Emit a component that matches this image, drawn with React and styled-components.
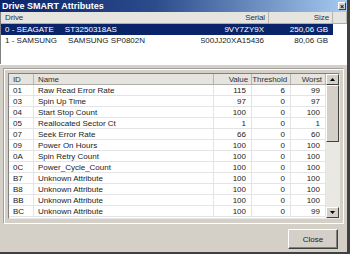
import styled, { createGlobalStyle } from "styled-components";

const GlobalStyle = createGlobalStyle`
  html, body {
    margin: 0;
    padding: 0;
    background: #d4d0c8;
  }
  * {
    box-sizing: border-box;
  }
`;

const Window = styled.div`
  width: 350px;
  height: 254px;
  background: #d4d0c8;
  border-right: 3px solid #404040;
  border-bottom: 2px solid #404040;
  display: flex;
  flex-direction: column;
  font-family: "Liberation Sans", Arial, sans-serif;
  font-size: 8px;
  color: #1a1a1a;
  overflow: hidden;
`;

const TitleBar = styled.div`
  height: 12px;
  flex: none;
  display: flex;
  align-items: center;
  justify-content: space-between;
  padding: 0 1px 0 2px;
  background: linear-gradient(to right, #0a246a 0%, #2c4c8c 45%, #a6caf0 100%);
  color: #fff;
  font-weight: bold;
  font-size: 9px;
`;

const CloseBox = styled.div`
  width: 8px;
  height: 8px;
  background: #d4d0c8;
  border: 1px solid #fff;
  border-right-color: #404040;
  border-bottom-color: #404040;
  display: flex;
  align-items: center;
  justify-content: center;
  color: #000;
  font-size: 7px;
  line-height: 1;
`;

const DriveList = styled.div`
  height: 52px;
  flex: none;
  background: #fff;
  border-left: 1px solid #808080;
`;

const Header = styled.div`
  display: grid;
  grid-template-columns: ${(p) => p.$cols};
  height: ${(p) => p.$h || 11}px;
  background: #e6e4de;
  border-bottom: 1px solid #b0aea8;
`;

const HeadCell = styled.div`
  display: flex;
  align-items: center;
  justify-content: ${(p) => (p.$right ? "flex-end" : "flex-start")};
  padding: ${(p) => (p.$right ? "0 3px 0 0" : "0 4px")};
  border-right: ${(p) => (p.$plain ? "none" : "1px solid #b8b6b0")};
  white-space: nowrap;
  letter-spacing: -0.1px;
  color: #333;
`;

const Row = styled.div`
  display: grid;
  grid-template-columns: ${(p) => p.$cols};
  height: 11px;
  background: ${(p) => (p.$selected ? "#0a246a" : "transparent")};
  color: ${(p) => (p.$selected ? "#fff" : "#1a1a1a")};
  border-bottom: ${(p) => (p.$lines ? "1px solid #e4e4e4" : "none")};
`;

const Cell = styled.div`
  display: flex;
  align-items: center;
  justify-content: ${(p) => (p.$right ? "flex-end" : "flex-start")};
  padding: 0 ${(p) => (p.$right ? 5 : 3)}px 0 4px;
  white-space: pre;
  overflow: hidden;
  background: ${(p) => (p.$blank ? "#fff" : "transparent")};
  border-right: ${(p) => (p.$lines ? "1px solid #e4e4e4" : "none")};
`;

const Gap = styled.div`
  height: 4px;
  flex: none;
  border-top: 1px solid #fff;
`;

const Panel = styled.div`
  height: 156px;
  flex: none;
  margin: 0 3px;
  padding: 4px 3px 4px 4px;
  border: 1px solid #a0a0a0;
  border-right-color: #fff;
  border-bottom-color: #fff;
  box-shadow: inset 1px 1px 0 #fff;
`;

const AttrBox = styled.div`
  height: 146px;
  display: flex;
  background: #fff;
  border: 1px solid #808080;
  border-right-color: #e8e8e8;
  border-bottom-color: #e8e8e8;
`;

const AttrTable = styled.div`
  flex: 1;
`;

const ScrollBar = styled.div`
  width: 13px;
  flex: none;
  display: flex;
  flex-direction: column;
  background: #eae8e2;
`;

const ScrollBtn = styled.div`
  height: 11px;
  flex: none;
  background: #d4d0c8;
  border: 1px solid #fff;
  border-right-color: #404040;
  border-bottom-color: #404040;
  display: flex;
  align-items: center;
  justify-content: center;
`;

const Thumb = styled.div`
  height: 57px;
  flex: none;
  background: #d4d0c8;
  border: 1px solid #fff;
  border-right-color: #404040;
  border-bottom-color: #404040;
`;

const Track = styled.div`
  flex: 1;
`;

const Footer = styled.div`
  flex: 1;
  display: flex;
  justify-content: flex-end;
  align-items: flex-start;
  padding: 5px 9px 0 0;
`;

const Button = styled.button`
  width: 50px;
  height: 20px;
  background: #d4d0c8;
  border: 1px solid #fff;
  border-right-color: #404040;
  border-bottom-color: #404040;
  box-shadow: inset -1px -1px 0 #808080;
  font-family: "Liberation Sans", Arial, sans-serif;
  font-size: 8px;
  color: #1a1a1a;
  padding: 0;
`;

const Arrow = ({ up }) => (
  <svg width="5" height="3" viewBox="0 0 5 3">
    <path d={up ? "M0 3 L2.5 0 L5 3 Z" : "M0 0 L2.5 3 L5 0 Z"} fill="#000" />
  </svg>
);

const driveCols = "200px 68px 64px 1fr";
const drives = [
  { name: "0 - SEAGATE     ST3250318AS", serial: "9VY7ZY9X", size: "250,06 GB" },
  { name: "1 - SAMSUNG     SAMSUNG SP0802N", serial: "S00JJ20XA15436", size: "80,06 GB" },
];

const attrCols = "25px 180px 38px 39px 1fr";
const attrs = [
  ["01", "Raw Read Error Rate", 115, 6, 99],
  ["03", "Spin Up Time", 97, 0, 97],
  ["04", "Start Stop Count", 100, 0, 100],
  ["05", "Reallocated Sector Ct", 1, 0, 1],
  ["07", "Seek Error Rate", 66, 0, 60],
  ["09", "Power On Hours", 100, 0, 100],
  ["0A", "Spin Retry Count", 100, 0, 100],
  ["0C", "Power_Cycle_Count", 100, 0, 100],
  ["B7", "Unknown Attribute", 100, 0, 100],
  ["B8", "Unknown Attribute", 100, 0, 100],
  ["BB", "Unknown Attribute", 100, 0, 100],
  ["BC", "Unknown Attribute", 100, 0, 99],
];

export default function App() {
  return (
    <>
      <GlobalStyle />
      <Window>
        <TitleBar>
          <span>Drive SMART Attributes</span>
          <CloseBox>×</CloseBox>
        </TitleBar>
        <DriveList>
          <Header $cols={driveCols} $h={12}>
            <HeadCell $plain>Drive</HeadCell>
            <HeadCell $right>Serial</HeadCell>
            <HeadCell $right>Size</HeadCell>
            <HeadCell />
          </Header>
          {drives.map((d, i) => (
            <Row key={d.serial} $cols={driveCols} $selected={i === 0}>
              <Cell>{d.name}</Cell>
              <Cell $right>{d.serial}</Cell>
              <Cell $right>{d.size}</Cell>
              <Cell $blank />
            </Row>
          ))}
        </DriveList>
        <Gap />
        <Panel>
          <AttrBox>
            <AttrTable>
              <Header $cols={attrCols}>
                <HeadCell>ID</HeadCell>
                <HeadCell>Name</HeadCell>
                <HeadCell $right>Value</HeadCell>
                <HeadCell $right>Threshold</HeadCell>
                <HeadCell $right>Worst</HeadCell>
              </Header>
              {attrs.map(([id, name, value, thr, worst]) => (
                <Row key={id + name} $cols={attrCols} $lines>
                  <Cell $lines>{id}</Cell>
                  <Cell $lines>{name}</Cell>
                  <Cell $lines $right>{value}</Cell>
                  <Cell $lines $right>{thr}</Cell>
                  <Cell $lines $right>{worst}</Cell>
                </Row>
              ))}
            </AttrTable>
            <ScrollBar>
              <ScrollBtn>
                <Arrow up />
              </ScrollBtn>
              <Thumb />
              <Track />
              <ScrollBtn>
                <Arrow />
              </ScrollBtn>
            </ScrollBar>
          </AttrBox>
        </Panel>
        <Footer>
          <Button>Close</Button>
        </Footer>
      </Window>
    </>
  );
}
